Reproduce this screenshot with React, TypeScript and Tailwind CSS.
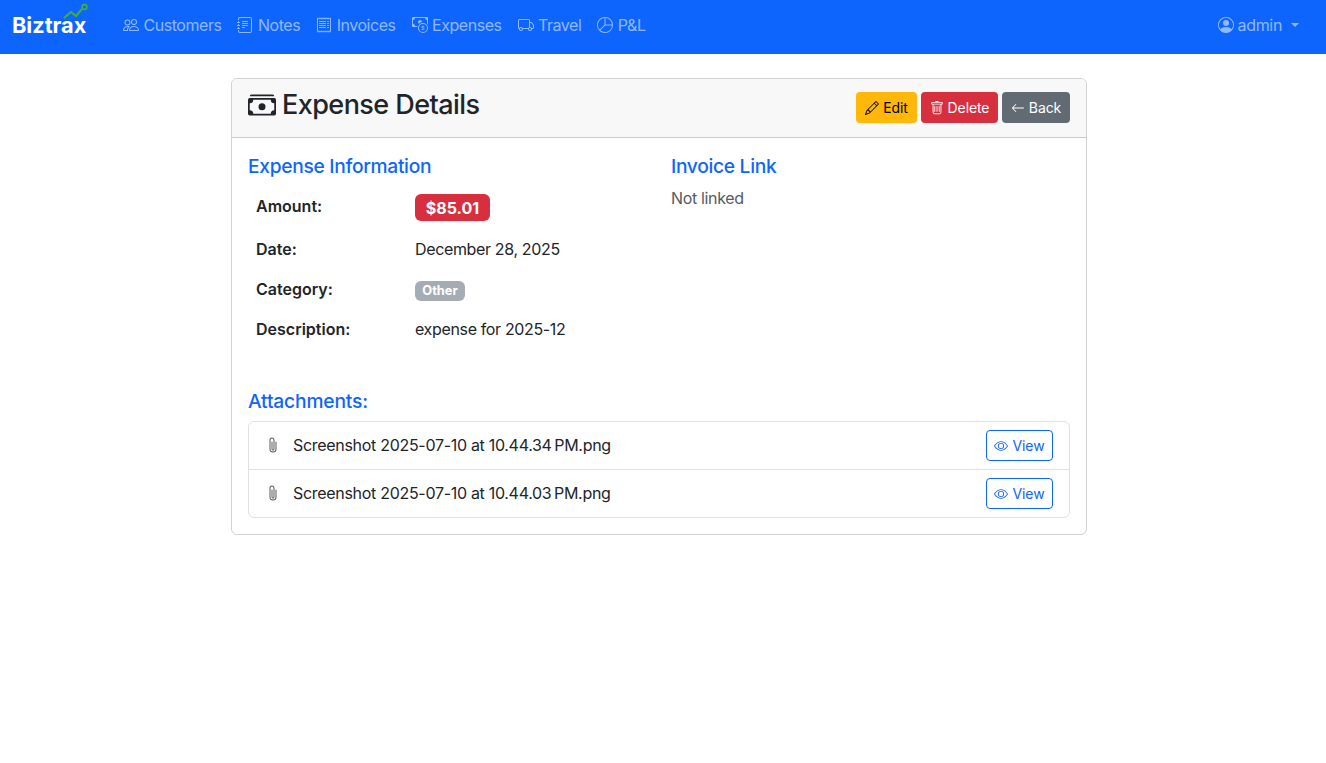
import type { ReactNode } from "react";
import {
  BsArrowLeft,
  BsCashCoin,
  BsCashStack,
  BsEye,
  BsJournalText,
  BsPaperclip,
  BsPencil,
  BsPeople,
  BsPersonCircle,
  BsPieChart,
  BsReceipt,
  BsTrash,
  BsTruck,
} from "react-icons/bs";

const navItems = [
  { label: "Customers", icon: <BsPeople /> },
  { label: "Notes", icon: <BsJournalText /> },
  { label: "Invoices", icon: <BsReceipt /> },
  { label: "Expenses", icon: <BsCashCoin /> },
  { label: "Travel", icon: <BsTruck /> },
  { label: "P&L", icon: <BsPieChart /> },
];

const attachments = [
  "Screenshot 2025-07-10 at 10.44.34\u202fPM.png",
  "Screenshot 2025-07-10 at 10.44.03\u202fPM.png",
];

function Logo() {
  return (
    <div className="relative mr-[36px] ml-3 h-[54px] w-[75px] self-start">
      <span className="absolute top-[10px] left-0 text-[21.7px] leading-[30px] font-bold tracking-normal text-white">Biztrax</span>
      <svg className="absolute top-[3px] left-[39px]" width="38" height="17" viewBox="0 0 38 17" fill="none">
        <path d="M13 15 L20 9 L25 13 L31 6" stroke="#3fb03a" strokeWidth="2" />
        <circle cx="33.5" cy="4" r="2.4" stroke="#3fb03a" strokeWidth="1.6" />
      </svg>
    </div>
  );
}

function Row({ label, height, children }: { label: string; height: string; children: ReactNode }) {
  return (
    <div className={`flex ${height}`}>
      <div className="w-[167px] pl-2 font-semibold tracking-normal">{label}</div>
      <div>{children}</div>
    </div>
  );
}

function ActionButton({ className, icon, label }: { className: string; icon: ReactNode; label: string }) {
  return (
    <div className={`flex h-[31px] items-center justify-center gap-1 rounded-[4px] text-[14px] tracking-[-0.1px] ${className}`}>
      <span className="text-[14px]">{icon}</span>
      {label}
    </div>
  );
}

export default function App() {
  return (
    <div className="min-h-[763px] bg-white font-['Inter','Liberation_Sans',sans-serif] text-[16px] leading-6 tracking-[-0.35px] text-[#212529]">
      <nav className="flex h-[54px] items-center bg-[#0d65fd] pb-1 text-[rgba(255,255,255,0.55)]">
        <Logo />
        <div className="flex gap-4">
          {navItems.map((item) => (
            <div key={item.label} className="flex items-center gap-[4.5px] tracking-[-0.46px]">
              <span className="text-[16px]">{item.icon}</span>
              {item.label}
            </div>
          ))}
        </div>
        <div className="mr-[27px] ml-auto flex items-center gap-[4px]">
          <BsPersonCircle className="text-[16px]" />
          admin
          <span className="ml-[5px] h-0 w-0 border-x-[4.8px] border-t-[4.8px] border-x-transparent border-t-[rgba(255,255,255,0.55)]" />
        </div>
      </nav>

      <main className="mt-6 ml-[231px] w-[856px] rounded-[6px] border border-[rgba(0,0,0,0.18)]">
        <header className="flex h-[59px] items-start justify-between rounded-t-[5px] border-b border-[rgba(0,0,0,0.18)] bg-[#f8f8f8] px-4 pt-2">
          <h1 className="mt-[2px] flex items-center gap-[6px] text-[27px] leading-[32px] font-medium tracking-[-0.55px]">
            <BsCashStack className="text-[28px]" />
            Expense Details
          </h1>
          <div className="mt-[5px] flex gap-1">
            <ActionButton className="w-[61px] bg-[#ffb80a] text-black" icon={<BsPencil />} label="Edit" />
            <ActionButton className="w-[77px] bg-[#d82f3f] text-white" icon={<BsTrash />} label="Delete" />
            <ActionButton className="w-[68px] bg-[#626a73] text-white" icon={<BsArrowLeft />} label="Back" />
          </div>
        </header>

        <div className="p-4">
          <div className="flex h-[235px]">
            <section className="w-[423px]">
              <h2 className="text-[19.2px] leading-6 font-medium tracking-[-0.3px] text-[#0d65fd]">Expense Information</h2>
              <div className="mt-[16px]">
                <Row label="Amount:" height="h-[43px]">
                  <span className="flex h-[27px] w-[75px] items-center justify-center rounded-[6px] bg-[#d82f3f] text-[16px] font-bold tracking-normal text-white">
                    $85.01
                  </span>
                </Row>
                <Row label="Date:" height="h-[40px]">
                  December 28, 2025
                </Row>
                <Row label="Category:" height="h-[40px]">
                  <span className="mt-[4px] flex h-[20px] w-[50px] items-center justify-center rounded-[6px] bg-[#a5acb4] text-[12.8px] font-bold tracking-normal text-white">
                    Other
                  </span>
                </Row>
                <Row label="Description:" height="h-[40px]">
                  expense for 2025-12
                </Row>
              </div>
            </section>
            <section>
              <h2 className="text-[19.2px] leading-6 font-medium tracking-[-0.3px] text-[#0d65fd]">Invoice Link</h2>
              <p className="mt-[8px] text-[#555b61]">Not linked</p>
            </section>
          </div>

          <h2 className="text-[19.2px] leading-6 font-medium tracking-[-0.15px] text-[#0d65fd]">Attachments:</h2>
          <ul className="mt-2 rounded-[6px] border border-[#dee2e6]">
            {attachments.map((name, i) => (
              <li
                key={name}
                className={`flex items-center justify-between px-4 ${i > 0 ? "h-[48px] border-t border-[#dee2e6]" : "h-[47px]"}`}
              >
                <div className="flex items-center gap-3 pb-[2px]">
                  <BsPaperclip className="text-[16px] text-[#555b61]" />
                  <span className="tracking-[-0.3px]">{name}</span>
                </div>
                <div className="flex h-[31px] w-[67px] items-center justify-center gap-1 rounded-[4px] border border-[#0d65fd] text-[14px] tracking-[-0.1px] text-[#0d65fd]">
                  <BsEye className="text-[14px]" />
                  View
                </div>
              </li>
            ))}
          </ul>
        </div>
      </main>
    </div>
  );
}
